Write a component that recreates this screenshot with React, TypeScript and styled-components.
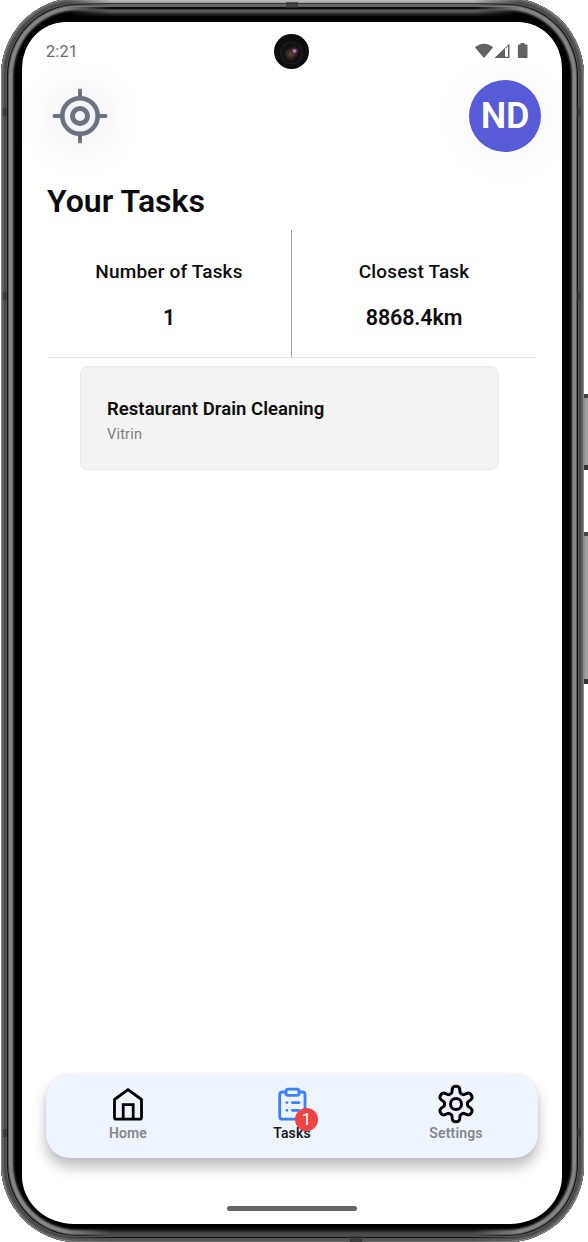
import React from "react";
import styled, { createGlobalStyle } from "styled-components";

const GlobalStyle = createGlobalStyle`
  * { box-sizing: border-box; }
  html, body { margin: 0; height: 1242px; overflow: hidden; background: #fff; }
  body { font-family: Roboto, "Liberation Sans", sans-serif; color: #0b0b0c; }
`;

const Stage = styled.div`
  position: relative;
  width: 588px;
  height: 1242px;
  overflow: hidden;
`;

const Frame = styled.div`
  position: relative;
  width: 583px;
  height: 1244px;
  margin: -2px 0 0 1px;
  padding: 24px 22px 18px 21px;
  border-radius: 76px / 78px;
  background: #000;
  box-shadow:
    inset 0 0 0 1px #8a8a8a,
    inset 0 0 0 3px #5e5e5e,
    inset 0 0 0 5px #484848,
    inset 0 0 0 6px #5a5a5a,
    inset 0 0 0 7px #101010,
    inset 0 0 0 8px #5b5b5b,
    inset 0 0 0 11px #858585,
    inset 0 0 0 12px #6c6c6c,
    inset 0 0 0 13px #303030,
    inset 0 0 0 14px #121212;
`;

const EdgeShine = styled.div<{ $bottom?: boolean }>`
  position: absolute;
  left: 50px;
  right: 50px;
  ${(p) => (p.$bottom ? "bottom: 0;" : "top: 2px;")}
  height: ${(p) => (p.$bottom ? 18 : 22)}px;
  mask-image: linear-gradient(90deg, transparent 14px, #000 60px, #000 calc(100% - 60px), transparent calc(100% - 14px));
  background: ${(p) =>
    p.$bottom
      ? "linear-gradient(#000 0 3px, #151515 6px, #484848 9px, #505050 13px, #111 13px 14px, #555 14px 17px, #666 17px)"
      : "linear-gradient(#b8b8b8 0 1px, #999 3px, #333 3px 4px, #666 4px 7px, #080808 7px 9px, #303030 9px, #666 11px, #292929 14px, #000 17px)"};
`;

const SideKey = styled.div<{ $top: number; $height: number }>`
  position: absolute;
  left: 584px;
  top: ${(p) => p.$top}px;
  width: 4px;
  height: ${(p) => p.$height}px;
  background: linear-gradient(90deg, #777, #a0a0a0 1px);
  border-top: 4px solid #444;
  border-bottom: 5px solid #333;
`;

const Antenna = styled.div<{ $x: number; $y: number; $wide?: boolean }>`
  position: absolute;
  left: ${(p) => p.$x}px;
  top: ${(p) => p.$y}px;
  width: ${(p) => (p.$wide ? 12 : 4)}px;
  height: ${(p) => (p.$wide ? 6 : 8)}px;
  background: #333;
  opacity: 0.7;
`;

const Screen = styled.main`
  position: relative;
  display: flex;
  flex-direction: column;
  width: 540px;
  height: 1202px;
  border-radius: 44px 44px 52px 52px / 46px 46px 48px 48px;
  overflow: hidden;
  background: #fff;
`;

const StatusBar = styled.div`
  display: flex;
  align-items: center;
  justify-content: space-between;
  height: 58px;
  padding: 0 33px 0 24px;
  font-size: 16.3px;
  letter-spacing: 0.2px;
  color: #6a6a6a;
`;

const Camera = styled.div`
  position: absolute;
  left: 252px;
  top: 12px;
  width: 35px;
  height: 35px;
  border-radius: 50%;
  background:
    radial-gradient(circle at 20.5px 17px, #c085ae 0 0.8px, rgba(90, 40, 75, 0.75) 2.5px, transparent 4.5px),
    radial-gradient(circle at 17px 20px, #574529 0 1px, #262120 5px, transparent 7px),
    radial-gradient(circle at 17.5px 19px, #111 0 10px, #1c1c1c 10px 11px, #0d0d0d 12px);
`;

const Header = styled.header`
  display: flex;
  justify-content: space-between;
  height: 72px;
  padding: 0 21px 0 22px;
`;

const LocateButton = styled.button`
  display: grid;
  place-items: center;
  width: 72px;
  height: 72px;
  padding: 0;
  border: 0;
  border-radius: 50%;
  background: #fafafa;
  box-shadow: 0 3px 44px rgba(0, 0, 0, 0.045);
`;

const Avatar = styled.div`
  display: grid;
  place-items: center;
  width: 72px;
  height: 72px;
  border-radius: 50%;
  background: #585bd6;
  color: #fff;
  box-shadow: 0 3px 50px rgba(0, 0, 0, 0.05);
  font: 600 36px/1 Roboto, sans-serif;
  letter-spacing: -0.2px;
`;

const Content = styled.section`
  position: relative;
  padding: 0 26px 0 25px;
`;

const Title = styled.h1`
  margin: 29px 0 0;
  height: 49px;
  font-size: 32px;
  font-weight: 600;
  line-height: 40px;
  letter-spacing: 0.02px;
`;

const Stats = styled.div`
  display: flex;
  height: 128px;
  border-bottom: 1px solid #dfe1e5;
`;

const Stat = styled.div<{ $divided?: boolean }>`
  flex: 1;
  padding-top: 29px;
  text-align: center;
  border-right: ${(p) => (p.$divided ? "1px solid #9ca0a8" : "0")};
`;

const StatLabel = styled.div`
  font-size: 19px;
  font-weight: 500;
  line-height: 25px;
  letter-spacing: 0.17px;
`;

const StatValue = styled.div`
  margin-top: 20px;
  font-size: 21.5px;
  font-weight: 600;
  line-height: 28px;
  letter-spacing: -0.15px;
`;

const TaskCard = styled.article`
  width: 419px;
  height: 104px;
  margin: 8px 0 0 33px;
  padding: 30px 26px;
  border: 1px solid #e8e8e9;
  border-radius: 8px;
  background: #f3f3f3;
`;

const TaskName = styled.div`
  font-size: 18.5px;
  font-weight: 600;
  line-height: 24px;
  letter-spacing: 0.05px;
`;

const TaskClient = styled.div`
  margin-top: 3px;
  font-size: 14.5px;
  line-height: 22px;
  letter-spacing: 0.2px;
  color: #7c7c84;
`;

const TabBar = styled.nav`
  display: flex;
  flex: none;
  width: 492px;
  height: 84px;
  margin: auto 0 48px 24px;
  border-radius: 24px;
  background: #eef5ff;
  box-shadow: 0 9px 14px rgba(0, 0, 0, 0.26), 0 0 3px rgba(0, 0, 0, 0.08);
`;

const Tab = styled.div<{ $active?: boolean }>`
  position: relative;
  display: flex;
  flex: 1;
  flex-direction: column;
  align-items: center;
  padding-top: 11px;
  font-size: 14px;
  font-weight: 600;
  line-height: 16px;
  letter-spacing: 0.15px;
  color: ${(p) => (p.$active ? "#18191c" : "#858789")};
  svg { margin-bottom: 2px; overflow: visible; }
`;

const Badge = styled.span`
  position: absolute;
  left: 85px;
  top: 34px;
  width: 23px;
  height: 23px;
  border-radius: 50%;
  background: #ef4444;
  color: #fff;
  font-size: 17px;
  font-weight: 400;
  line-height: 23px;
  text-align: center;
`;

const HomeIndicator = styled.div`
  flex: none;
  width: 130px;
  height: 5px;
  margin: 0 0 13px 205px;
  border-radius: 3px;
  background: #666;
`;

const CrosshairIcon = () => (
  <svg width="56" height="56" viewBox="0 0 56 56" fill="none" stroke="#6b7280" strokeLinecap="round">
    <circle cx="28" cy="28" r="17.7" fill="#f3f4f6" strokeWidth="4.6" />
    <circle cx="28" cy="28" r="7.5" strokeWidth="5" />
    <path d="M28 2.5v7M28 46.5v7M2.5 28h7M46.5 28h7" strokeWidth="4" />
  </svg>
);

const StatusIcons = () => (
  <svg width="54" height="18" viewBox="0 0 54 18" fill="#626262">
    <path d="M0 5.5C5 .6 13 .6 18 5.5L9 16Z" />
    <path d="M19.5 16 34.5 1.5V16Z" />
    <path d="M30 7v7.8h3V4.2Z" fill="#fff" />
    <path d="M45.5 1h4v1.5H52q.5 0 .5.7v12q0 .8-.8.8h-8q-.8 0-.8-.8v-12q0-.7.6-.7h2Z" />
  </svg>
);

const HomeIcon = () => (
  <svg width="36" height="38" viewBox="0 0 36 38" fill="none" stroke="#000" strokeWidth="2.8" strokeLinejoin="round">
    <path d="M18 4.7 31.5 14.5V32.5Q31.5 34.2 29.8 34.2H6.2Q4.5 34.2 4.5 32.5V14.5Z" />
    <path d="M13.2 34.2V19.7H23.2V34.2" strokeLinejoin="miter" />
  </svg>
);

const ClipboardIcon = () => (
  <svg width="36" height="38" viewBox="0 0 36 38" fill="none" stroke="#3b82f6" strokeWidth="2.8" strokeLinecap="round" strokeLinejoin="round">
    <path d="M11.5 7H8.5Q5.7 7 5.7 9.8V31.4Q5.7 34.2 8.5 34.2H28.2Q31 34.2 31 31.4V9.8Q31 7 28.2 7H25" />
    <rect x="12" y="4.2" width="13" height="6.2" rx="1.8" />
    <path d="M18.3 17.6H25M18.3 25.3H25M12.9 17.6H13M12.9 25.3H13" />
  </svg>
);

const gearOutline = (() => {
  const steps = 180;
  const points = Array.from({ length: steps }, (_, i) => {
    const angle = (i / steps) * Math.PI * 2;
    const radius = 14.6 + (3.1 * Math.tanh(1.8 * Math.cos(6 * angle))) / Math.tanh(1.8);
    return `${(20 + radius * Math.sin(angle)).toFixed(2)} ${(19 - radius * Math.cos(angle)).toFixed(2)}`;
  });
  return `M${points.join("L")}Z`;
})();

const GearIcon = () => (
  <svg width="40" height="38" viewBox="0 0 40 38" fill="none" stroke="#000" strokeWidth="3" strokeLinejoin="round">
    <path d={gearOutline} />
    <circle cx="20" cy="19" r="5.5" />
  </svg>
);

export default function App() {
  return (
    <Stage>
      <GlobalStyle />
      <Frame>
        <EdgeShine />
        <EdgeShine $bottom />
        <Screen>
          <StatusBar>
            <span>2:21</span>
            <StatusIcons />
          </StatusBar>
          <Camera />
          <Header>
            <LocateButton aria-label="Locate me"><CrosshairIcon /></LocateButton>
            <Avatar>ND</Avatar>
          </Header>
          <Content>
            <Title>Your Tasks</Title>
            <Stats>
              <Stat $divided>
                <StatLabel>Number of Tasks</StatLabel>
                <StatValue>1</StatValue>
              </Stat>
              <Stat>
                <StatLabel>Closest Task</StatLabel>
                <StatValue>8868.4km</StatValue>
              </Stat>
            </Stats>
            <TaskCard>
              <TaskName>Restaurant Drain Cleaning</TaskName>
              <TaskClient>Vitrin</TaskClient>
            </TaskCard>
          </Content>
          <TabBar>
            <Tab><HomeIcon />Home</Tab>
            <Tab $active><ClipboardIcon />Tasks<Badge>1</Badge></Tab>
            <Tab><GearIcon />Settings</Tab>
          </TabBar>
          <HomeIndicator />
        </Screen>
      </Frame>
      <SideKey $top={394} $height={76} />
      <SideKey $top={532} $height={152} />
      <Antenna $x={3} $y={108} />
      <Antenna $x={3} $y={292} />
      <Antenna $x={3} $y={1129} />
      <Antenna $x={577} $y={108} />
      <Antenna $x={577} $y={292} />
      <Antenna $x={577} $y={1129} />
      <Antenna $wide $x={286} $y={2} />
      <Antenna $wide $x={350} $y={1236} />
    </Stage>
  );
}
